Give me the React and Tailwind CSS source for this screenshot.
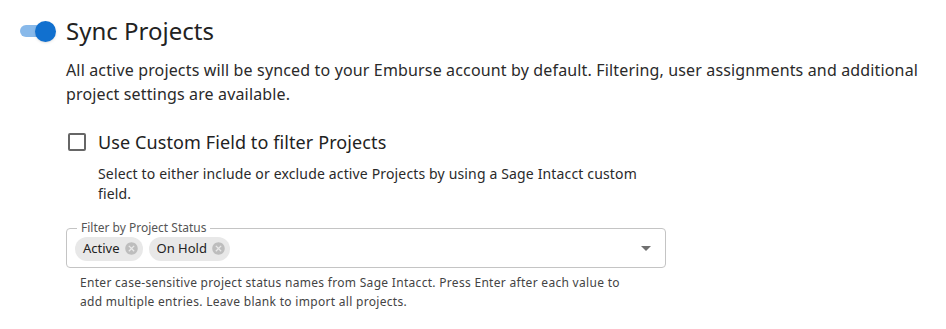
import { useState } from "react";

const Chip = ({ label }) => (
  <span className="flex items-center h-6 rounded-full bg-[#e8e8e8] pl-2 pr-1 text-[13px] text-[#222]">
    {label}
    <svg viewBox="0 0 24 24" className="ml-1 w-[15px] h-[15px]" fill="#bdbdbd">
      <path d="M12 2C6.47 2 2 6.47 2 12s4.47 10 10 10 10-4.47 10-10S17.53 2 12 2zm5 13.59L15.59 17 12 13.41 8.41 17 7 15.59 10.59 12 7 8.41 8.41 7 12 10.59 15.59 7 17 8.41 13.41 12 17 15.59z" />
    </svg>
  </span>
);

const App = () => {
  const [sync, setSync] = useState(true);
  const [custom, setCustom] = useState(false);

  return (
    <div className="w-[946px] h-[329px] bg-white text-[#1f1f1f] font-['Noto_Sans',sans-serif] pt-[14px]">
      {/* Header */}
      <div className="flex items-center pl-[20px]">
        <button
          onClick={() => setSync(!sync)}
          className="relative w-[36px] h-[34px] flex items-center"
        >
          <span className="block w-[28px] h-[12px] rounded-full bg-[#88b9ea]" />
          <span className="absolute left-[15px] w-[21px] h-[21px] rounded-full bg-[#1170cf] shadow-sm" />
        </button>
        <h1 className="ml-[10px] text-[24px] leading-[34px] text-[#222]">Sync Projects</h1>
      </div>

      <div className="pl-[66px] pr-4">
        <p className="mt-[10px] text-[16px] leading-[24px] tracking-[0.15px] text-[#2a2a2a]">
          All active projects will be synced to your Emburse account by default. Filtering, user assignments and additional
          project settings are available.
        </p>

        {/* Checkbox */}
        <label className="mt-[20px] h-[32px] flex items-center cursor-pointer">
          <input
            type="checkbox"
            checked={custom}
            onChange={() => setCustom(!custom)}
            className="ml-[2px] appearance-none w-[18px] h-[18px] border-2 border-[#666] rounded-[2px]"
          />
          <span className="ml-[12px] text-[18px] leading-[26px] tracking-[0.1px] text-[#222]">Use Custom Field to filter Projects</span>
        </label>
        <p className="ml-[32px] mt-[6px] w-[560px] text-[14px] leading-[20px] tracking-[0.15px] text-[#2a2a2a]">
          Select to either include or exclude active Projects by using a Sage Intacct custom field.
        </p>

        {/* Filter field */}
        <div className="relative mt-[24px] w-[600px] h-[40px] border border-[#c4c4c4] rounded-[4px] pl-[8px] pr-[14px] flex items-center">
          <span className="absolute left-[10px] -top-[9px] px-[4px] bg-white text-[12px] leading-[16px] text-[#555]">
            Filter by Project Status
          </span>
          <div className="flex items-center gap-[6px] flex-1 mt-[1px]">
            <Chip label="Active" />
            <Chip label="On Hold" />
          </div>
          <svg viewBox="0 0 10 5" className="w-[10px] h-[5px]" fill="#707070">
            <path d="M0 0 L10 0 L5 5 Z" />
          </svg>
        </div>
        <p className="ml-[14px] mt-[5px] w-[556px] text-[12px] leading-[19px] tracking-[0.3px] text-[#444]">
          Enter case-sensitive project status names from Sage Intacct. Press Enter after each value to add multiple
          entries. Leave blank to import all projects.
        </p>
      </div>
    </div>
  );
};

export default App;
